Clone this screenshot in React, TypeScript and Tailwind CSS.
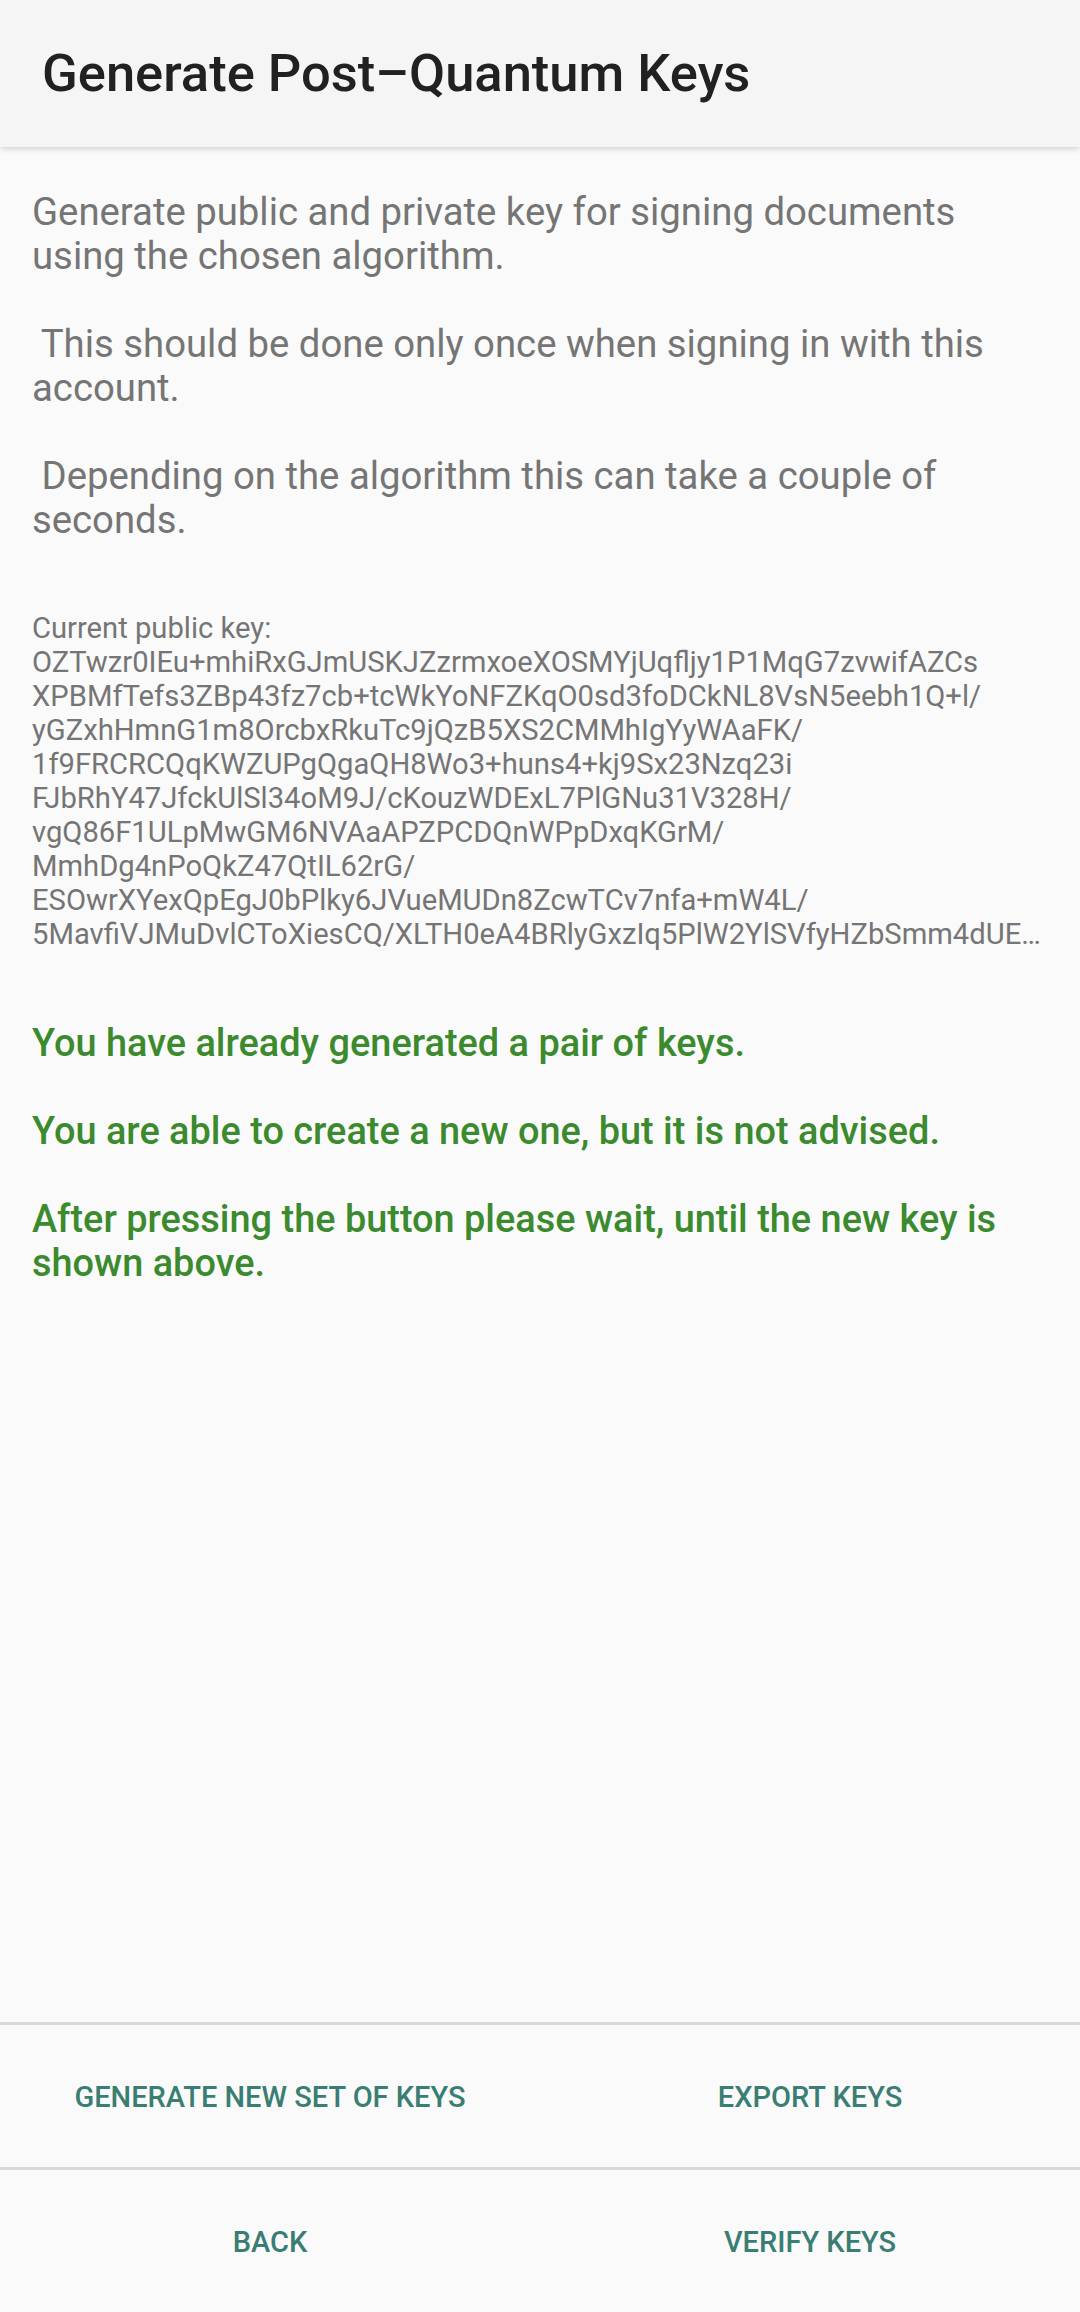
import React from "react";

const bodyLines = [
  "Generate public and private key for signing documents",
  "using the chosen algorithm.",
  "",
  " This should be done only once when signing in with this",
  "account.",
  "",
  " Depending on the algorithm this can take a couple of",
  "seconds.",
];

const keyLines = [
  "Current public key:",
  "OZTwzr0IEu+mhiRxGJmUSKJZzrmxoeXOSMYjUqfljy1P1MqG7zvwifAZCs",
  "XPBMfTefs3ZBp43fz7cb+tcWkYoNFZKqO0sd3foDCkNL8VsN5eebh1Q+l/",
  "yGZxhHmnG1m8OrcbxRkuTc9jQzB5XS2CMMhIgYyWAaFK/",
  "1f9FRCRCQqKWZUPgQgaQH8Wo3+huns4+kj9Sx23Nzq23i",
  "FJbRhY47JfckUlSl34oM9J/cKouzWDExL7PlGNu31V328H/",
  "vgQ86F1ULpMwGM6NVAaAPZPCDQnWPpDxqKGrM/",
  "MmhDg4nPoQkZ47QtIL62rG/",
  "ESOwrXYexQpEgJ0bPlky6JVueMUDn8ZcwTCv7nfa+mW4L/",
  "5MavfiVJMuDvlCToXiesCQ/XLTH0eA4BRlyGxzIq5PlW2YlSVfyHZbSmm4dUE…",
];

const greenLines = [
  "You have already generated a pair of keys.",
  "",
  "You are able to create a new one, but it is not advised.",
  "",
  "After pressing the button please wait, until the new key is",
  "shown above.",
];

function Btn({ label }: { label: string }) {
  return (
    <button className="flex-1 flex items-center justify-center pt-[3px] text-[29px] font-medium tracking-normal text-[#3a7e73] uppercase">
      {label}
    </button>
  );
}

export default function App() {
  return (
    <div className="w-[1080px] h-[2312px] bg-[#fafafa] flex flex-col font-[Roboto,sans-serif] overflow-hidden">
      <header className="relative z-10 h-[147px] shrink-0 bg-[#f5f5f5] shadow-[0_2px_6px_rgba(0,0,0,0.16)] flex items-center pl-[42px]">
        <h1 className="text-[52.5px] font-medium text-[#212121] leading-none">
          Generate Post–Quantum Keys
        </h1>
      </header>

      <main className="flex-1 px-[32px] pt-[42.5px]">
        <div className="text-[38.3px] leading-[44px] text-[#757575]">
          {bodyLines.map((l, i) => (
            <div key={i} className="whitespace-pre h-[44px]">
              {l}
            </div>
          ))}
        </div>

        <div className="mt-[69.5px] text-[29.2px] leading-[34px] text-[#757575]">
          {keyLines.map((l, i) => (
            <div key={i} className="whitespace-pre h-[34px]">
              {l}
            </div>
          ))}
        </div>

        <div className="mt-[69.5px] text-[37.9px] leading-[44px] font-medium text-[#3b8a2e]">
          {greenLines.map((l, i) => (
            <div key={i} className="whitespace-pre h-[44px]">
              {l}
            </div>
          ))}
        </div>
      </main>

      <footer className="shrink-0">
        <div className="h-[145px] border-t-[3px] border-[#d9d9d9] flex">
          <Btn label="Generate new set of keys" />
          <Btn label="Export keys" />
        </div>
        <div className="h-[145px] border-t-[3px] border-[#d9d9d9] flex">
          <Btn label="Back" />
          <Btn label="Verify keys" />
        </div>
      </footer>
    </div>
  );
}
